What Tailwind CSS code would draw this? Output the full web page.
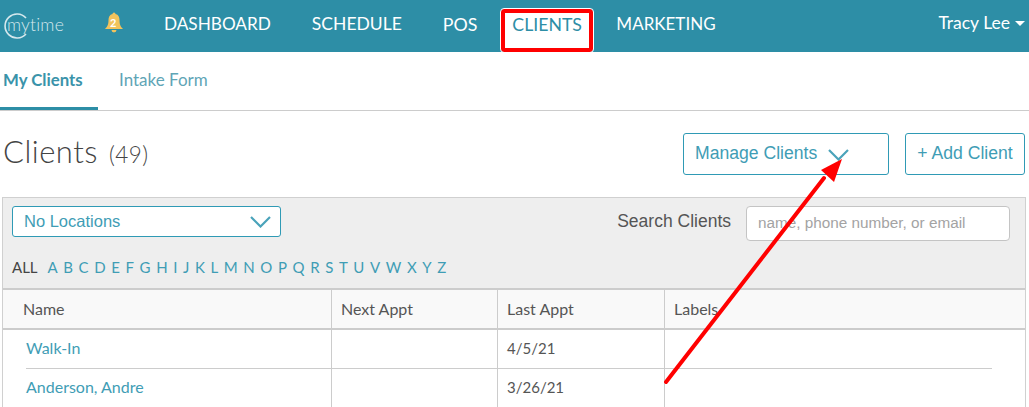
<!DOCTYPE html>
<html lang="en">
<head>
  <meta charset="UTF-8">
  <title>Clients | MyTime</title>
  <script src="https://cdn.jsdelivr.net/npm/@tailwindcss/browser@4"></script>
</head>
<body class="relative w-[1029px] h-[407px] overflow-hidden bg-white font-['Lato',sans-serif]">

  <!-- Top nav -->
  <header class="flex items-start h-[52px] bg-[#2d8ea6] text-white text-[17.2px]">
    <div class="relative ml-[4px] mt-[13px] w-[62px] h-[26px]">
      <svg width="26" height="26" viewBox="0 0 26 26" fill="none" stroke="#d5e8ed" stroke-width="1.6">
        <path d="M22 5A12 12 0 1 0 22 21"/>
      </svg>
      <span class="absolute left-[3px] top-[1px] text-[17.5px] leading-[22px] font-light tracking-[0.2px] text-[#d5e8ed]">mytime</span>
    </div>
    <div class="relative ml-[39px] mt-[12px] w-[18px] h-[22px]">
      <svg width="18" height="22" viewBox="0 0 18 22" fill="#f2c35c">
        <path d="M7.500 2a1.500 1.500 0 0 1 3 0c3 .8 4 3 4 6 0 4.500 1 6.500 3.500 9H0c2.500-2.500 3.500-4.500 3.500-9 0-3 1-5.200 4-6zM6.500 18h5a2.500 2.500 0 0 1-5 0z"/>
      </svg>
      <span class="absolute left-[5px] top-[4px] text-[11px] leading-[14px] font-bold text-white">2</span>
    </div>
    <nav class="flex items-start ml-[41px] leading-[20px]">
      <a class="mt-[14px]">DASHBOARD</a>
      <a class="mt-[14px] ml-[41px] text-[17.500px]">SCHEDULE</a>
      <a class="mt-[14px] ml-[41px] text-[17.800px]">POS</a>
      <a class="mt-[9px] ml-[24px] w-[92px] h-[43px] pl-[7px] pt-[2px] text-[17.700px] bg-white text-[#2d8ea6] border-[4px] border-[#ff0000] rounded-[3px] outline outline-1 outline-white">CLIENTS</a>
      <a class="mt-[14px] ml-[23px] text-[17px]">MARKETING</a>
    </nav>
    <div class="flex items-center ml-auto mr-[4px] mt-[13px] gap-[5px] text-[17.500px] leading-[20px]">
      Tracy Lee
      <span class="w-0 h-0 border-x-[5px] border-x-transparent border-t-[5px] border-t-white"></span>
    </div>
  </header>

  <!-- Sub nav -->
  <div class="flex h-[59px] border-b border-[#cccccc]">
    <a class="w-[98px] h-[58px] pl-[3px] pt-[18px] text-[16.800px] leading-[20px] font-bold text-[#3a93aa] border-b-[3px] border-[#2d8ea6]">My Clients</a>
    <a class="ml-[21px] pt-[18px] text-[17px] leading-[20px] text-[#5fa5b6]">Intake Form</a>
  </div>

  <!-- Title row -->
  <div class="flex items-start h-[86px] pt-[22px] pl-[3px]">
    <h1 class="-mt-[2px] text-[31px] leading-[40px] font-light text-[#444444] tracking-[0.5px]">Clients <span class="ml-[2px] text-[22.500px]">(49)</span></h1>
    <button class="flex items-center ml-auto w-[206px] h-[42px] pl-[11px] pb-[2px] border border-[#2f9ab5] rounded-[3px] font-['Liberation_Sans',sans-serif] text-[17.600px] text-[#3f9db5]">
      Manage Clients
      <svg class="ml-[11px] mt-[3px]" width="21" height="12" viewBox="0 0 21 12" fill="none" stroke="#4aa3ba" stroke-width="2.200"><path d="M1 1l9.500 9.500L20 1"/></svg>
    </button>
    <button class="ml-[16px] mr-[4px] w-[120px] h-[42px] pb-[2px] border border-[#2f9ab5] rounded-[3px] font-['Liberation_Sans',sans-serif] text-[17.600px] text-[#3f9db5]">+ Add Client</button>
  </div>

  <!-- Clients panel -->
  <section class="ml-[2px] mr-[3px] border border-[#d0d0d0] border-b-0">
    <div class="h-[92px] bg-[#eeeeee] px-[9px] pt-[8px] border-b-[2px] border-[#cccccc]">
      <div class="flex items-start justify-between">
        <div class="flex items-center justify-between w-[269px] h-[31px] pl-[11px] pr-[9px] bg-white border border-[#2f9ab5] rounded-[3px] font-['Liberation_Sans',sans-serif] text-[16.500px] text-[#3f9db5]">
          No Locations
          <svg width="21" height="12" viewBox="0 0 21 12" fill="none" stroke="#4aa3ba" stroke-width="2.200"><path d="M1 1l9.500 9.500L20 1"/></svg>
        </div>
        <div class="flex items-start mr-[6px] font-['Liberation_Sans',sans-serif]">
          <span class="mt-[5px] text-[17.500px] leading-[20px] text-[#555555]">Search Clients</span>
          <div class="flex items-center ml-[15px] w-[264px] h-[35px] pl-[11px] bg-white border border-[#c4c4c4] rounded-[4px] text-[15.300px] text-[#a3a3a3]">name, phone number, or email</div>
        </div>
      </div>
      <div class="flex items-center mt-[16px] text-[15px] leading-[20px] text-[#3f9db5]">
        <span class="mr-[10px] text-[#444444]">ALL</span>
        <div class="flex gap-[5.600px]">
          <a>A</a><a>B</a><a>C</a><a>D</a><a>E</a><a>F</a><a>G</a><a>H</a><a>I</a><a>J</a><a>K</a><a>L</a><a>M</a><a>N</a><a>O</a><a>P</a><a>Q</a><a>R</a><a>S</a><a>T</a><a>U</a><a>V</a><a>W</a><a>X</a><a>Y</a><a>Z</a>
        </div>
      </div>
    </div>

    <div class="grid grid-cols-[329px_166px_167px_1fr] text-[16px] leading-[20px]">
      <!-- Header -->
      <div class="h-[40px] pl-[20px] pt-[9px] bg-[#f9f9f9] border-b-[2px] border-r border-[#cccccc] text-[#555555]">Name</div>
      <div class="h-[40px] pl-[9px] pt-[9px] bg-[#f9f9f9] border-b-[2px] border-r border-[#cccccc] text-[#555555]">Next Appt</div>
      <div class="h-[40px] pl-[9px] pt-[9px] bg-[#f9f9f9] border-b-[2px] border-r border-[#cccccc] text-[#555555]">Last Appt</div>
      <div class="h-[40px] pl-[9px] pt-[9px] bg-[#f9f9f9] border-b-[2px] border-[#cccccc] text-[#555555]">Labels</div>
      <!-- Row 1 -->
      <div class="h-[39px] pt-[8px] border-r border-[#cccccc] pl-[23px] text-[#3f9db5]">Walk-In</div>
      <div class="h-[39px] pt-[8px] border-r border-[#cccccc]"></div>
      <div class="h-[39px] pt-[8px] pl-[9px] border-r border-[#cccccc] text-[15px] text-[#555555]">4/5/21</div>
      <div class="h-[39px]"></div>
      <!-- Row 2 -->
      <div class="h-[39px] pt-[8px] border-r border-[#cccccc] pl-[23px] text-[#3f9db5]">Anderson, Andre</div>
      <div class="h-[39px] pt-[8px] border-r border-[#cccccc]"></div>
      <div class="h-[39px] pt-[8px] pl-[9px] border-r border-[#cccccc] text-[15px] text-[#555555]">3/26/21</div>
      <div class="h-[39px]"></div>
    </div>
  </section>

  <!-- Divider between rows, drawn over the columns -->
  <div class="absolute left-[26px] top-[368px] w-[966px] h-px bg-[#cccccc]"></div>

  <!-- Annotation arrow -->
  <svg class="absolute left-0 top-0" width="1029" height="407" fill="none">
    <path d="M666 382L824 178" stroke="#ff0000" stroke-width="4" stroke-linecap="round"/>
    <path d="M842 159L834 182L821 170Z" fill="#ff0000"/>
  </svg>
</body>
</html>
